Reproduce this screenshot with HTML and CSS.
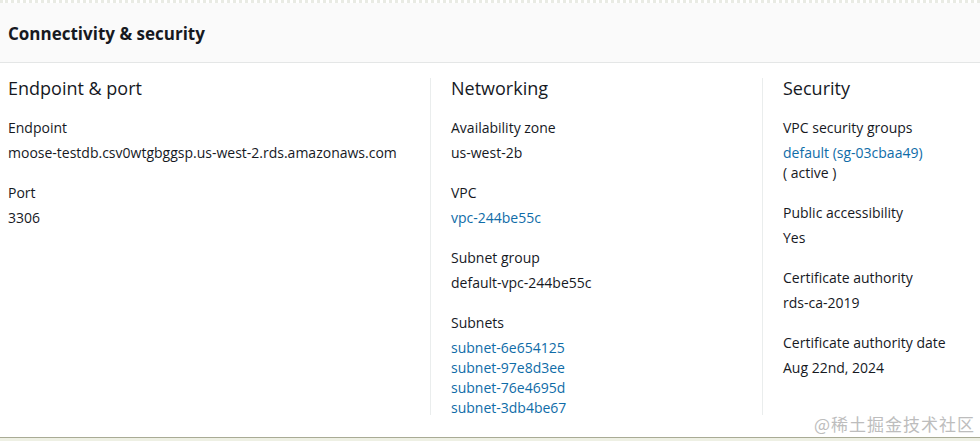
FILE: index.html
```html
<!DOCTYPE html>
<html>
<head>
<meta charset="utf-8">
<link rel="stylesheet" href="styles.css">
</head>
<body>
<div class="panel">
  <div class="panel-header">
    <h2 class="panel-title">Connectivity &amp; security</h2>
  </div>
  <div class="panel-body">
    <div class="col col-first">
      <h3 class="col-title">Endpoint &amp; port</h3>
      <div class="field">
        <div class="label">Endpoint</div>
        <div class="value">moose-testdb.csv0wtgbggsp.us-west-2.rds.amazonaws.com</div>
      </div>
      <div class="field">
        <div class="label">Port</div>
        <div class="value">3306</div>
      </div>
    </div>
    <div class="col">
      <h3 class="col-title">Networking</h3>
      <div class="field">
        <div class="label">Availability zone</div>
        <div class="value">us-west-2b</div>
      </div>
      <div class="field">
        <div class="label">VPC</div>
        <div class="value"><a class="link" href="#">vpc-244be55c</a></div>
      </div>
      <div class="field">
        <div class="label">Subnet group</div>
        <div class="value">default-vpc-244be55c</div>
      </div>
      <div class="field">
        <div class="label">Subnets</div>
        <div class="value list">
          <a class="link" href="#">subnet-6e654125</a>
          <a class="link" href="#">subnet-97e8d3ee</a>
          <a class="link" href="#">subnet-76e4695d</a>
          <a class="link" href="#">subnet-3db4be67</a>
        </div>
      </div>
    </div>
    <div class="col">
      <h3 class="col-title">Security</h3>
      <div class="field">
        <div class="label">VPC security groups</div>
        <div class="value list">
          <a class="link" href="#">default (sg-03cbaa49)</a>
          <span>( active )</span>
        </div>
      </div>
      <div class="field">
        <div class="label">Public accessibility</div>
        <div class="value">Yes</div>
      </div>
      <div class="field">
        <div class="label">Certificate authority</div>
        <div class="value">rds-ca-2019</div>
      </div>
      <div class="field">
        <div class="label">Certificate authority date</div>
        <div class="value">Aug 22nd, 2024</div>
      </div>
    </div>
  </div>
  <div class="watermark">@稀土掘金技术社区</div>
</div>
</body>
</html>
```

FILE: styles.css
```css
html, body {
  margin: 0;
  padding: 0;
  background: #ffffff;
}

body {
  font-family: "Open Sans", "Noto Sans", sans-serif;
  color: #16191f;
  width: 980px;
  height: 441px;
  overflow: hidden;
}

.panel {
  position: relative;
  height: 441px;
  box-sizing: border-box;
  border-top: 3px dotted #e9ebe4;
  border-bottom: 3px solid #eef0e4;
  display: flex;
  flex-direction: column;
}

.panel-header {
  height: 60px;
  flex: none;
  box-sizing: border-box;
  background: #fafafa;
  border-bottom: 1px solid #e4e6e6;
  display: flex;
  align-items: center;
  padding: 0 8px;
}

.panel-title {
  margin: 0;
  padding-top: 2px;
  font-size: 17px;
  font-weight: 700;
  line-height: 22px;
  color: #16191f;
}

.panel-body {
  flex: 1;
  display: grid;
  grid-template-columns: 430px 332px 1fr;
  padding-top: 13px;
  border-bottom: 1px solid #a9ab95;
  align-items: start;
}

.col {
  border-left: 1px solid #eaeded;
  padding: 0 20px;
  margin-top: 2px;
  height: 337px;
  box-sizing: border-box;
}

.col-first {
  border-left: none;
  padding-left: 8px;
}

.col-title {
  margin: -2px 0 18px 0;
  font-size: 18px;
  font-weight: 400;
  line-height: 24px;
  color: #16191f;
}

.field {
  margin-bottom: 20px;
}

.label {
  font-size: 14px;
  line-height: 20px;
  color: #16191f;
  margin-bottom: 5px;
}

.value {
  font-size: 14px;
  line-height: 20px;
  color: #16191f;
}

.list {
  display: flex;
  flex-direction: column;
}

.link {
  color: #0f6ca8;
  text-decoration: none;
}

.watermark {
  position: absolute;
  right: 5px;
  bottom: 2px;
  font-family: "Noto Sans CJK SC", sans-serif;
  font-size: 17px;
  line-height: 24px;
  color: #bdbdbd;
  letter-spacing: 1px;
}
```
